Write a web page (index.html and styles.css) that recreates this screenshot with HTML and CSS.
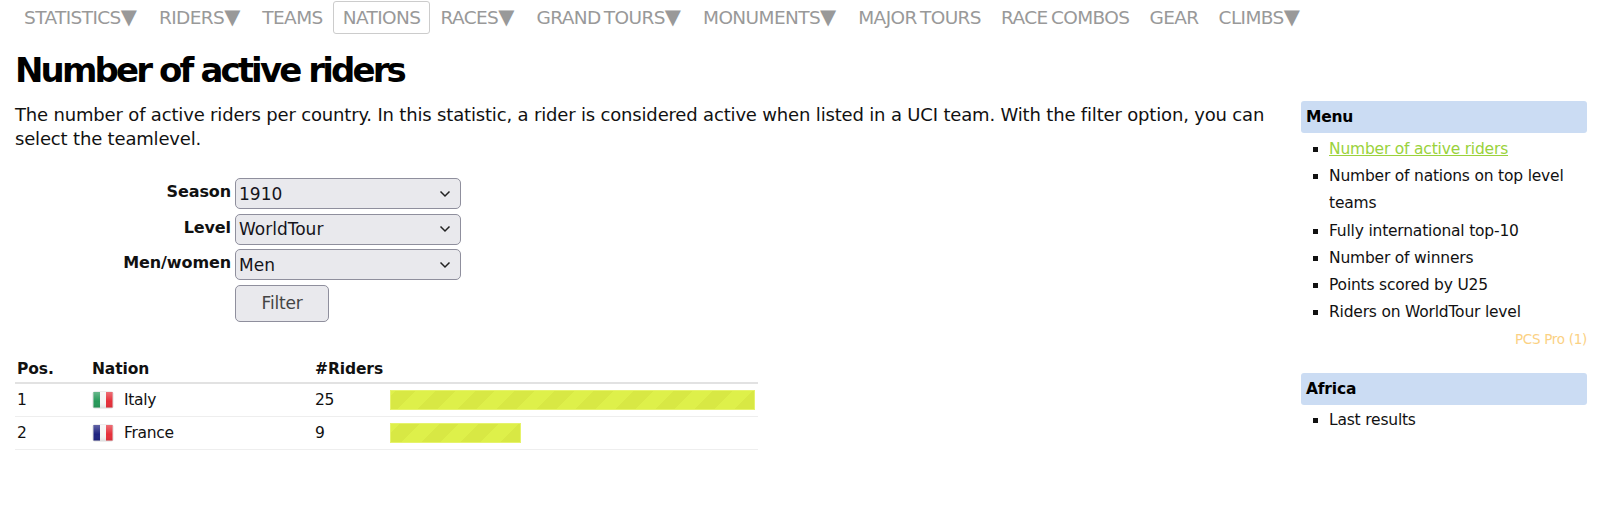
FILE: index.html
```html
<!DOCTYPE html>
<html lang="en">
<head>
    <meta charset="UTF-8">
    <meta name="viewport" content="width=device-width, initial-scale=1.0">
    <title>Number of active riders</title>
    <link rel="stylesheet" href="styles.css">
</head>
<body>

    <ul class="topnav">
        <li><a href="#">STATISTICS<span class="arrow">▼</span></a></li>
        <li><a href="#">RIDERS<span class="arrow">▼</span></a></li>
        <li><a href="#">TEAMS</a></li>
        <li class="current"><a href="#">NATIONS</a></li>
        <li><a href="#">RACES<span class="arrow">▼</span></a></li>
        <li><a href="#">GRAND TOURS<span class="arrow">▼</span></a></li>
        <li><a href="#">MONUMENTS<span class="arrow">▼</span></a></li>
        <li><a href="#">MAJOR TOURS</a></li>
        <li><a href="#">RACE COMBOS</a></li>
        <li><a href="#">GEAR</a></li>
        <li><a href="#">CLIMBS<span class="arrow">▼</span></a></li>
    </ul>

    <h1>Number of active riders</h1>

    <div class="page">
        <div class="content">
            <p class="intro">The number of active riders per country. In this statistic, a rider is considered active when listed in a UCI team. With the filter option, you can select the teamlevel.</p>

            <form class="filter">
                <label for="season">Season</label>
                <select id="season"><option>1910</option></select>
                <label for="level">Level</label>
                <select id="level"><option>WorldTour</option></select>
                <label for="gender">Men/women</label>
                <select id="gender"><option>Men</option></select>
                <button type="button">Filter</button>
            </form>

            <table class="ranking">
                <thead>
                    <tr>
                        <th class="col-pos">Pos.</th>
                        <th class="col-nation">Nation</th>
                        <th class="col-count">#Riders</th>
                        <th></th>
                    </tr>
                </thead>
                <tbody>
                    <tr>
                        <td>1</td>
                        <td>
                            <span class="nation">
                                <svg class="flag" viewBox="0 0 22 18">
                                    <defs>
                                        <linearGradient id="gloss" x1="0" y1="0" x2="0" y2="1">
                                            <stop offset="0" stop-color="#fff" stop-opacity="0.3"/>
                                            <stop offset="0.6" stop-color="#fff" stop-opacity="0"/>
                                            <stop offset="1" stop-color="#000" stop-opacity="0.08"/>
                                        </linearGradient>
                                    </defs>
                                    <rect x="0.5" y="0.5" width="21" height="17" rx="2" fill="#dcdcdc"/>
                                    <rect x="1.5" y="1" width="6.5" height="15.5" fill="#27995a"/>
                                    <rect x="8" y="1" width="6" height="15.5" fill="#f5f5f5"/>
                                    <rect x="14" y="1" width="6.5" height="15.5" fill="#e6303a"/>
                                    <rect x="1.5" y="1" width="19" height="15.5" fill="url(#gloss)"/>
                                </svg>
                                Italy
                            </span>
                        </td>
                        <td>25</td>
                        <td><div class="bar" style="width: 100%"></div></td>
                    </tr>
                    <tr>
                        <td>2</td>
                        <td>
                            <span class="nation">
                                <svg class="flag" viewBox="0 0 22 18">
                                    <rect x="0.5" y="0.5" width="21" height="17" rx="2" fill="#dcdcdc"/>
                                    <rect x="1.5" y="1" width="6.5" height="15.5" fill="#1f2380"/>
                                    <rect x="8" y="1" width="6" height="15.5" fill="#f5f5f5"/>
                                    <rect x="14" y="1" width="6.5" height="15.5" fill="#e6303a"/>
                                    <rect x="1.5" y="1" width="19" height="15.5" fill="url(#gloss)"/>
                                </svg>
                                France
                            </span>
                        </td>
                        <td>9</td>
                        <td><div class="bar" style="width: 36%"></div></td>
                    </tr>
                </tbody>
            </table>
        </div>

        <div class="sidebar">
            <h4>Menu</h4>
            <ul>
                <li><a class="active" href="#">Number of active riders</a></li>
                <li>Number of nations on top level teams</li>
                <li>Fully international top-10</li>
                <li>Number of winners</li>
                <li>Points scored by U25</li>
                <li>Riders on WorldTour level</li>
            </ul>
            <div class="pro">PCS Pro (1)</div>

            <h4 class="second">Africa</h4>
            <ul class="short">
                <li>Last results</li>
            </ul>
        </div>
    </div>

</body>
</html>
```

FILE: styles.css
```css
body {
    margin: 0;
    font-family: "DejaVu Sans", sans-serif;
    font-size: 15px;
    color: #111;
    background: #fff;
}
a {
    color: inherit;
    text-decoration: none;
}

.topnav {
    display: flex;
    margin: 0;
    padding: 1px 0 0 14px;
    list-style: none;
    height: 33px;
    font-size: 18.5px;
    letter-spacing: -0.6px;
    word-spacing: -2px;
    color: #999;
}
.topnav li {
    display: flex;
    align-items: center;
    padding: 0 9px;
    border: 1px solid transparent;
    border-radius: 3px;
}
.topnav li.current {
    border-color: #ccc;
}
.arrow {
    font-size: 21px;
    line-height: 1;
    letter-spacing: 0;
    margin-right: 2px;
}

h1 {
    margin: 14px 0 0 15px;
    font-size: 34px;
    line-height: 44px;
    font-weight: bold;
    letter-spacing: -2.87px;
    color: #000;
}

.page {
    display: flex;
    padding-left: 15px;
}
.content {
    width: 1270px;
}
.intro {
    margin: 11px 0 0;
    font-size: 18px;
    line-height: 24px;
    letter-spacing: -0.17px;
}

.filter {
    display: grid;
    grid-template-columns: 216px 226px;
    column-gap: 4px;
    row-gap: 4.5px;
    margin-top: 27px;
    align-items: start;
}
.filter label {
    text-align: right;
    font-weight: bold;
    font-size: 16px;
    line-height: 28px;
    letter-spacing: -0.1px;
}
.filter select {
    appearance: none;
    height: 31px;
    padding: 0 3px;
    border: 1px solid #8f8f9d;
    border-radius: 5px;
    font-family: inherit;
    font-size: 17px;
    letter-spacing: 0;
    color: #15141a;
    background: #e9e9ed url("data:image/svg+xml,%3Csvg xmlns='http://www.w3.org/2000/svg' width='12' height='8'%3E%3Cpath d='M1.5 1.5 6 6l4.5-4.5' fill='none' stroke='%23222' stroke-width='1.5'/%3E%3C/svg%3E") no-repeat right 9px center;
}
.filter button {
    grid-column: 2;
    justify-self: start;
    width: 94px;
    height: 37px;
    border: 1px solid #8f8f9d;
    border-radius: 5px;
    font-family: inherit;
    font-size: 17px;
    letter-spacing: -0.2px;
    color: #444;
    background: #e9e9ed;
}

.ranking {
    width: 743px;
    margin-top: 37px;
    border-collapse: collapse;
    table-layout: fixed;
    font-size: 15.5px;
    letter-spacing: -0.3px;
}
.ranking th {
    text-align: left;
    padding: 0 2px 3px;
    height: 20px;
    font-size: 15.5px;
    letter-spacing: -0.1px;
    border-bottom: 2px solid #e2e2e2;
}
.ranking td {
    height: 32px;
    padding: 0 2px;
    border-bottom: 1px solid #eee;
}
.col-pos {
    width: 71px;
}
.col-nation {
    width: 219px;
}
.col-count {
    width: 71px;
}
.ranking td:last-child {
    padding-right: 3px;
}
.nation {
    display: flex;
    align-items: center;
    gap: 10px;
}
.flag {
    width: 22px;
    height: 18px;
}
.bar {
    height: 20px;
    box-sizing: border-box;
    border: 1px solid #e6f36b;
    background: repeating-linear-gradient(-45deg, #d8e844, #d8e844 14px, #def04a 14px, #def04a 28px);
}

.sidebar {
    width: 286px;
    margin-left: 16px;
    margin-top: 9px;
    font-size: 15.5px;
    letter-spacing: -0.2px;
}
.sidebar h4 {
    margin: 0;
    height: 32px;
    padding-left: 5px;
    line-height: 32px;
    font-size: 15.5px;
    letter-spacing: -0.2px;
    color: #000;
    background: #cbdcf3;
    border-radius: 3px;
}
.sidebar h4.second {
    margin-top: 21px;
}
.sidebar ul {
    margin: 0;
    padding: 3px 0 0 28px;
    list-style: square;
}
.sidebar ul.short {
    padding-top: 2px;
}
.sidebar li {
    line-height: 27.2px;
}
.sidebar .active {
    color: #9ad23c;
    text-decoration: underline;
}
.pro {
    text-align: right;
    font-size: 13.5px;
    line-height: 26px;
    letter-spacing: -0.3px;
    color: #fbd183;
}
```
